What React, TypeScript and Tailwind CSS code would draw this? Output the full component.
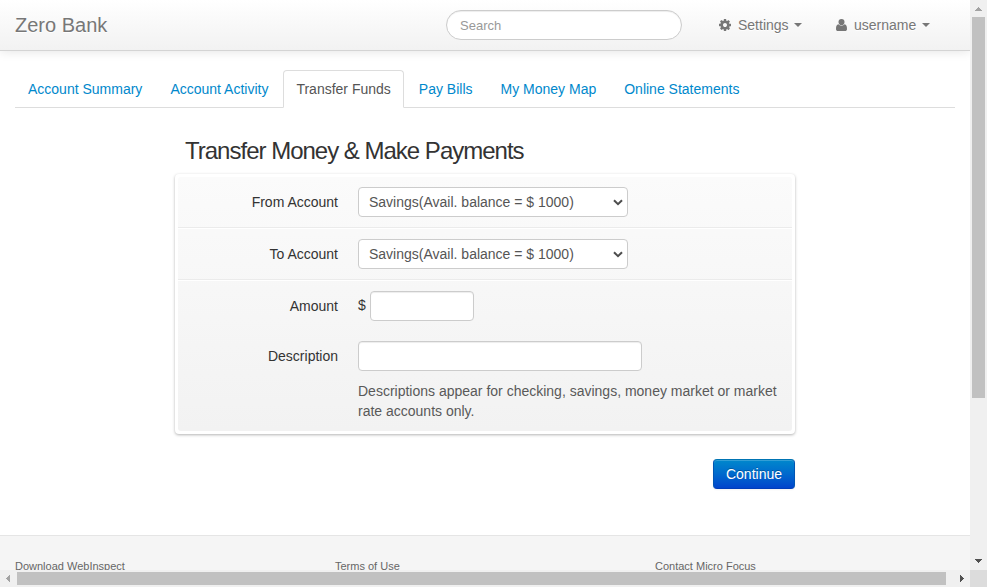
import type { ReactNode } from 'react';

const tabs = [
  { label: 'Account Summary' },
  { label: 'Account Activity' },
  { label: 'Transfer Funds', active: true },
  { label: 'Pay Bills' },
  { label: 'My Money Map' },
  { label: 'Online Statements' },
];

const fieldShadow = 'shadow-[inset_0_1px_1px_rgba(0,0,0,0.075)]';

function GearIcon() {
  return (
    <svg className="h-[14px] w-[12px]" viewBox="0 0 1536 1792" fill="currentColor">
      <path d="M1024 896q0-106-75-181t-181-75-181 75-75 181 75 181 181 75 181-75 75-181zm512-109v222q0 12-8 23t-20 13l-185 28q-19 54-39 91 35 50 107 138 10 12 10 25t-9 23q-27 37-99 108t-94 71q-12 0-26-9l-138-108q-44 23-91 38-16 136-29 186-7 28-36 28h-222q-14 0-24.5-8.5t-11.5-21.5l-28-184q-49-16-90-37l-141 107q-10 9-25 9-14 0-25-11-126-114-165-168-7-10-7-23 0-12 8-23 15-21 51-66.5t54-70.5q-27-50-41-99l-183-27q-13-2-21-12.5t-8-23.5v-222q0-12 8-23t19-13l186-28q14-46 39-92-40-57-107-138-10-12-10-24 0-10 9-23 26-36 98.5-107.5t94.5-71.5q13 0 26 10l138 107q44-23 91-38 16-136 29-186 7-28 36-28h222q14 0 24.5 8.5t11.5 21.5l28 184q49 16 90 37l142-107q9-9 24-9 13 0 25 10 129 119 165 170 7 8 7 22 0 12-8 23-15 21-51 66.5t-54 70.5q26 50 41 98l183 28q13 2 21 12.5t8 23.5z" />
    </svg>
  );
}

function UserIcon() {
  return (
    <svg className="h-3 w-[11px]" viewBox="0 0 11 12" fill="currentColor">
      <ellipse cx="5.5" cy="3.1" rx="3" ry="3.1" />
      <path d="M2.4 5.3C.6 5.600 0 7.400 0 9.900C0 11.200.8 12 2 12H9C10.200 12 11 11.200 11 9.900C11 7.400 10.400 5.600 8.600 5.300A4.200 4.200 0 0 1 2.400 5.300Z" />
    </svg>
  );
}

function Caret() {
  return <span className="mt-[-1px] h-0 w-0 border-x-4 border-t-4 border-x-transparent border-t-[#777]" />;
}

function Field({ label, children }: { label: string; children: ReactNode }) {
  return (
    <div className="flex">
      <div className="w-40 pt-[5px] text-right">{label}</div>
      <div className="ml-5 flex-1">{children}</div>
    </div>
  );
}

function AccountSelect() {
  return (
    <button
      type="button"
      className="flex h-[30px] w-[270px] items-center justify-between rounded border border-[#ccc] bg-white pr-1 pl-[10px] text-[#555]"
    >
      <span>Savings(Avail. balance = $ 1000)</span>
      <svg className="h-[7px] w-[10px]" viewBox="0 0 10 7" fill="none" stroke="#4d4d4d" strokeWidth="2">
        <path d="M1 1.200L5 5.200L9 1.200" />
      </svg>
    </button>
  );
}

function Header() {
  return (
    <header className="relative flex h-[51px] shrink-0 items-center border-b border-[#d4d4d4] bg-linear-to-b from-white to-[#f2f2f2] pl-[15px] text-[#777] shadow-[0_1px_10px_rgba(0,0,0,0.1)]">
      <div className="w-[431px] text-[20px] leading-5 [text-shadow:0_1px_0_#fff]">Zero Bank</div>
      <input
        placeholder="Search"
        className={`h-[30px] w-[236px] rounded-full border border-[#ccc] bg-white px-[13px] text-[13px] placeholder:text-[#999] placeholder:opacity-100 ${fieldShadow}`}
      />
      <div className="ml-[37px] flex w-[117px] items-center [text-shadow:0_1px_0_#fff]">
        <GearIcon />
        <span className="mr-[5px] ml-[7px]">Settings</span>
        <Caret />
      </div>
      <div className="flex items-center [text-shadow:0_1px_0_#fff]">
        <UserIcon />
        <span className="mr-[6px] ml-[7px]">username</span>
        <Caret />
      </div>
    </header>
  );
}

function Tabs() {
  return (
    <nav className="mx-[15px] mt-[19px] flex h-[38px] border-b border-[#ddd]">
      {tabs.map((tab) => (
        <a
          key={tab.label}
          className={
            tab.active
              ? 'mr-[2px] h-[38px] rounded-t border border-[#ddd] border-b-white bg-white px-3 pt-2 text-[#555]'
              : 'mr-[2px] h-[37px] border border-transparent px-3 pt-2 text-[#0088cc]'
          }
        >
          {tab.label}
        </a>
      ))}
    </nav>
  );
}

function TransferForm() {
  return (
    <section className="ml-[175px] w-[620px]">
      <h2 className="mt-[27px] mb-[7px] pl-[10px] text-[24px] leading-8 tracking-[-1px]">
        Transfer Money &amp; Make Payments
      </h2>
      <div className="rounded bg-white p-[3px] shadow-[0_1px_3px_rgba(0,0,0,0.3)]">
        <div className="rounded-[3px] bg-linear-to-b from-[#fbfbfb] to-[#f2f2f2]">
          <div className="border-b border-[#ebebeb] py-[10px]">
            <Field label="From Account">
              <AccountSelect />
            </Field>
          </div>
          <div className="border-y border-t-white border-b-[#ebebeb] py-[10px]">
            <Field label="To Account">
              <AccountSelect />
            </Field>
          </div>
          <div className="flex flex-col gap-5 border-t border-white py-[10px]">
            <Field label="Amount">
              <div className="flex">
                <span className="w-3 pt-[4px]">$</span>
                <input className={`h-[30px] w-[104px] rounded border border-[#ccc] bg-white ${fieldShadow}`} />
              </div>
            </Field>
            <Field label="Description">
              <input className={`block h-[30px] w-[284px] rounded border border-[#ccc] bg-white ${fieldShadow}`} />
              <p className="mt-[10px] text-[#595959]">
                Descriptions appear for checking, savings, money market or market rate accounts only.
              </p>
            </Field>
          </div>
        </div>
      </div>
      <div className="mt-[25px] flex justify-end">
        <button
          type="button"
          className="h-[30px] w-[82px] rounded border border-[#0055b3] border-t-[#0074b3] border-b-[#003db8] bg-linear-to-b from-[#0088cc] to-[#0044cc] text-white shadow-[inset_0_1px_0_rgba(255,255,255,0.2),0_1px_2px_rgba(0,0,0,0.05)] [text-shadow:0_-1px_0_rgba(0,0,0,0.25)]"
        >
          Continue
        </button>
      </div>
    </section>
  );
}

function Footer() {
  return (
    <footer className="mt-[46px] flex h-20 shrink-0 border-t border-[#e5e5e5] bg-[#f5f5f5] pt-5 pl-[15px] text-[11px] text-[#666]">
      <span className="w-80">Download WebInspect</span>
      <span className="w-80">Terms of Use</span>
      <span>Contact Micro Focus</span>
    </footer>
  );
}

export default function App() {
  return (
    <div className="grid h-[587px] w-[987px] grid-cols-[970px_17px] grid-rows-[570px_17px] overflow-hidden bg-white font-['Liberation_Sans',Arial,sans-serif] text-[14px] leading-5 text-[#333]">
      <div className="flex flex-col overflow-hidden">
        <Header />
        <Tabs />
        <TransferForm />
        <Footer />
      </div>
      <div className="flex flex-col items-center bg-[#f0f0f0]">
        <div className="flex h-[17px] items-start pt-[7px] pr-px">
          <svg className="h-1 w-[7px]" viewBox="0 0 7 4" fill="#a3a3a3" shapeRendering="crispEdges">
            <path d="M3 0h1v1h1v1h1v1h1v1H0V3h1V2h1V1h1z" />
          </svg>
        </div>
        <div className="h-[381px] w-[13px] bg-[#c1c1c1]" />
        <div className="mt-auto flex h-[17px] items-start pt-[6px]">
          <svg className="h-1 w-[7px]" viewBox="0 0 7 4" fill="#505050" shapeRendering="crispEdges">
            <path d="M0 0h7v1H6v1H5v1H4v1H3V3H2V2H1V1H0z" />
          </svg>
        </div>
      </div>
      <div className="flex items-center bg-[#f0f0f0]">
        <div className="flex w-[17px] pl-[6px]">
          <svg className="h-[7px] w-1" viewBox="0 0 4 7" fill="#a3a3a3" shapeRendering="crispEdges">
            <path d="M0 3h1V2h1V1h1V0h1v7H3V6H2V5H1V4H0z" />
          </svg>
        </div>
        <div className="h-[13px] w-[929px] bg-[#c1c1c1]" />
        <div className="ml-auto flex w-[17px] pl-[7px]">
          <svg className="h-[7px] w-1" viewBox="0 0 4 7" fill="#505050" shapeRendering="crispEdges">
            <path d="M0 0h1v1h1v1h1v1h1v1H3v1H2v1H1v1H0z" />
          </svg>
        </div>
      </div>
      <div className="bg-[#dcdcdc]" />
    </div>
  );
}
